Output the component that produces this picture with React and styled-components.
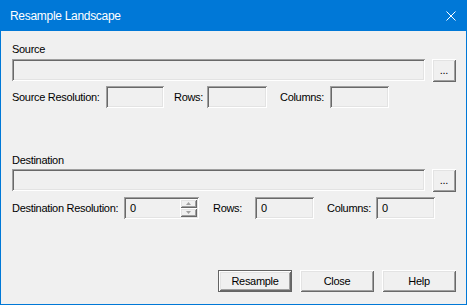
import React from "react"
import styled, { createGlobalStyle } from "styled-components"

const GlobalStyle = createGlobalStyle`
  html, body {
    margin: 0;
    padding: 0;
    background: #f0f0f0;
  }
  body {
    font-family: "Liberation Sans", Arial, sans-serif;
    font-size: 11px;
    letter-spacing: -0.3px;
    color: #000;
  }
`

const Window = styled.div`
  width: 467px;
  height: 305px;
  box-sizing: border-box;
  border: 1px solid #0078d7;
  border-top: none;
  display: flex;
  flex-direction: column;
  background: #f0f0f0;
`

const TitleBar = styled.div`
  height: 31px;
  flex: none;
  display: flex;
  align-items: center;
  justify-content: space-between;
  padding: 0 10px 0 9px;
  background: #0078d7;
  color: #fff;
  font-size: 12px;
`

const CloseIcon = styled.svg`
  width: 10px;
  height: 10px;
  display: block;
`

const Content = styled.div`
  flex: 1;
  display: flex;
  flex-direction: column;
  padding: 12px 10px 12px 11px;
`

const Group = styled.div`
  display: flex;
  flex-direction: column;
  margin-top: ${(p) => p.$top || 0}px;
`

const Caption = styled.div`
  height: 13px;
  line-height: 13px;
`

const PathRow = styled.div`
  display: flex;
  gap: 7px;
  margin-top: ${(p) => p.$top}px;
  height: 23px;
`

const sunken = `
  box-sizing: border-box;
  background: #f0f0f0;
  box-shadow: inset 1px 1px #a0a0a0, inset -1px -1px #ffffff,
    inset 2px 2px #696969, inset -2px -2px #e3e3e3;
`

const PathBox = styled.div`
  ${sunken}
  flex: 1;
  height: 22px;
`

const raised = `
  box-sizing: border-box;
  background: #f0f0f0;
  font-family: inherit;
  font-size: 11px;
  letter-spacing: inherit;
  color: #000;
  padding: 0;
  box-shadow: inset 1px 1px #ffffff, inset -1px -1px #696969,
    inset 2px 2px #e3e3e3, inset -2px -2px #a0a0a0;
`

const BrowseButton = styled.button`
  ${raised}
  border: none;
  width: 24px;
  height: 23px;
  line-height: 17px;
`

const ResRow = styled.div`
  display: flex;
  align-items: center;
  height: 22px;
  margin-top: ${(p) => p.$top}px;
`

const Label = styled.span`
  width: ${(p) => p.$w}px;
  margin-left: ${(p) => p.$gap || 0}px;
  flex: none;
  white-space: nowrap;
`

const Field = styled.div`
  ${sunken}
  width: ${(p) => p.$w}px;
  height: 22px;
  flex: none;
  display: flex;
  align-items: center;
  padding-left: 6px;
`

const Spin = styled(Field)`
  padding-right: 2px;
  justify-content: space-between;
`

const SpinButtons = styled.div`
  display: flex;
  flex-direction: column;
  align-self: center;
`

const SpinButton = styled.div`
  ${raised}
  width: 17px;
  height: 9px;
  display: flex;
  align-items: center;
  justify-content: center;
`

const ButtonRow = styled.div`
  margin-top: auto;
  display: flex;
  justify-content: flex-end;
  gap: 8px;
`

const DialogButton = styled.button`
  ${raised}
  width: 74px;
  height: 22px;
  border: ${(p) => (p.$default ? "1px solid #646464" : "none")};
`

const Arrow = ({ up }) => (
  <svg width="5" height="3" viewBox="0 0 5 3">
    <polygon points={up ? "2.5,0 5,3 0,3" : "0,0 5,0 2.5,3"} fill="#a0a0a0" />
  </svg>
)

function Section({ title, top, res, dest }) {
  return (
    <Group $top={top}>
      <Caption>{title}</Caption>
      <PathRow $top={dest ? 2 : 3}>
        <PathBox />
        <BrowseButton>...</BrowseButton>
      </PathRow>
      {dest ? (
        <ResRow $top={5}>
          <Label $w={112}>Destination Resolution:</Label>
          <Spin $w={75}>
            {res}
            <SpinButtons>
              <SpinButton><Arrow up /></SpinButton>
              <SpinButton><Arrow /></SpinButton>
            </SpinButtons>
          </Spin>
          <Label $w={42} $gap={14}>Rows:</Label>
          <Field $w={59}>0</Field>
          <Label $w={49} $gap={13}>Columns:</Label>
          <Field $w={59}>0</Field>
        </ResRow>
      ) : (
        <ResRow $top={4}>
          <Label $w={94}>Source Resolution:</Label>
          <Field $w={58} />
          <Label $w={33} $gap={10}>Rows:</Label>
          <Field $w={60} />
          <Label $w={50} $gap={13}>Columns:</Label>
          <Field $w={59} />
        </ResRow>
      )}
    </Group>
  )
}

export default function App() {
  return (
    <>
      <GlobalStyle />
      <Window>
        <TitleBar>
          <span>Resample Landscape</span>
          <CloseIcon viewBox="0 0 10 10">
            <path d="M0.5 0.5 L9.5 9.5 M9.5 0.5 L0.5 9.5" stroke="#fff" strokeWidth="1" />
          </CloseIcon>
        </TitleBar>
        <Content>
          <Section title="Source" />
          <Section title="Destination" top={46} res="0" dest />
          <ButtonRow>
            <DialogButton $default>Resample</DialogButton>
            <DialogButton>Close</DialogButton>
            <DialogButton>Help</DialogButton>
          </ButtonRow>
        </Content>
      </Window>
    </>
  )
}
